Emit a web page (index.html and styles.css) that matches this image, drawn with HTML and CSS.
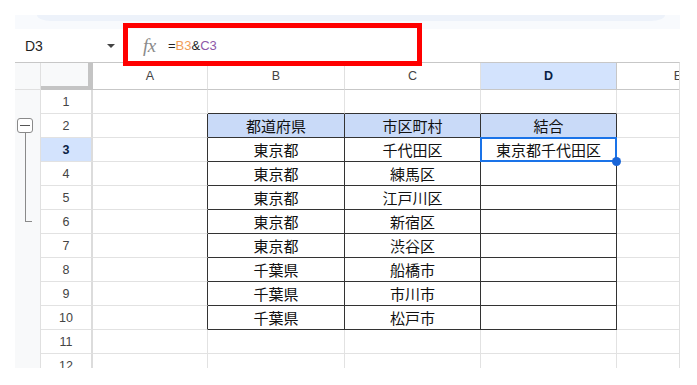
FILE: index.html
```html
<!DOCTYPE html>
<html lang="ja">
<head>
<meta charset="utf-8">
<link rel="stylesheet" href="styles.css">
</head>
<body>
<div class="app">
  <div class="top-band"><div class="pill"></div></div>
  <div class="fbar">
    <div class="namebox"><span class="name">D3</span><span class="caret"></span></div>
    <div class="formula"><span class="fx">fx</span><span class="ftext">=<span class="ref-b">B3</span>&amp;<span class="ref-c">C3</span></span></div>
    <div class="highlight"></div>
  </div>
  <div class="sheet">
    <div class="strip-head"></div>
    <div class="corner"></div>
    <div class="colh">A</div>
    <div class="colh">B</div>
    <div class="colh">C</div>
    <div class="colh active">D</div>
    <div class="colh clip"><span>E</span></div>

    <div class="strip">
      <div class="grp-box"><span class="minus"></span></div>
      <div class="grp-line"></div>
    </div>

    <div class="rowh">1</div>
    <div class="c"></div><div class="c tb-top"></div><div class="c tb-top"></div><div class="c tb-top"></div><div class="c"></div>

    <div class="rowh">2</div>
    <div class="c tb-left"></div><div class="c t hdr">都道府県</div><div class="c t hdr">市区町村</div><div class="c t hdr">結合</div><div class="c"></div>

    <div class="rowh active">3</div>
    <div class="c tb-left"></div><div class="c t">東京都</div><div class="c t">千代田区</div><div class="c t sel">東京都千代田区</div><div class="c"></div>

    <div class="rowh">4</div>
    <div class="c tb-left"></div><div class="c t">東京都</div><div class="c t">練馬区</div><div class="c t"></div><div class="c"></div>

    <div class="rowh">5</div>
    <div class="c tb-left"></div><div class="c t">東京都</div><div class="c t">江戸川区</div><div class="c t"></div><div class="c"></div>

    <div class="rowh">6</div>
    <div class="c tb-left"></div><div class="c t">東京都</div><div class="c t">新宿区</div><div class="c t"></div><div class="c"></div>

    <div class="rowh">7</div>
    <div class="c tb-left"></div><div class="c t">東京都</div><div class="c t">渋谷区</div><div class="c t"></div><div class="c"></div>

    <div class="rowh">8</div>
    <div class="c tb-left"></div><div class="c t">千葉県</div><div class="c t">船橋市</div><div class="c t"></div><div class="c"></div>

    <div class="rowh">9</div>
    <div class="c tb-left"></div><div class="c t">千葉県</div><div class="c t">市川市</div><div class="c t"></div><div class="c"></div>

    <div class="rowh">10</div>
    <div class="c tb-left"></div><div class="c t">千葉県</div><div class="c t">松戸市</div><div class="c t"></div><div class="c"></div>

    <div class="rowh">11</div>
    <div class="c"></div><div class="c"></div><div class="c"></div><div class="c"></div><div class="c"></div>

    <div class="rowh">12</div>
    <div class="c"></div><div class="c"></div><div class="c"></div><div class="c"></div><div class="c"></div>
  </div>
</div>
</body>
</html>
```
FILE: styles.css
```css
* { box-sizing: border-box; }
html, body { margin: 0; padding: 0; background: #fff; }
body { width: 697px; height: 385px; overflow: hidden; font-family: "Liberation Sans", Arial, sans-serif; }

.app { padding: 15px 0 0 15px; width: 697px; }

.top-band { width: 665px; height: 14px; background: #f8fafd; }
.pill { margin-left: 22px; width: 628px; height: 6px; background: #edf2fa; border-radius: 0 0 14px 14px / 0 0 6px 6px; }

.fbar { position: relative; height: 33px; display: flex; align-items: center; width: 665px; }
.namebox { width: 108px; display: flex; align-items: center; padding-left: 10px; }
.name { font-size: 14px; color: #1f1f1f; width: 82px; }
.caret { width: 0; height: 0; border-left: 4.5px solid transparent; border-right: 4.5px solid transparent; border-top: 4.5px solid #444; margin-top: 1px; }
.formula { display: flex; align-items: center; padding-left: 20px; }
.fx { font-family: "Liberation Serif", "DejaVu Serif", serif; font-style: italic; font-size: 19px; color: #8a8a8a; width: 25px; letter-spacing: -0.5px; }
.ftext { font-size: 13px; color: #1f1f1f; }
.ref-b { color: #f29d57; }
.ref-c { color: #8e58a8; }
.highlight { position: absolute; left: 108px; top: -6px; width: 299px; height: 43px; border: 5px solid #ff0000; z-index: 5; }

.sheet {
  display: grid;
  grid-template-columns: 26px 52px 115px 137px 136px 136px 63px;
  grid-template-rows: 27px repeat(12, 24px);
  height: 306px;
  width: 665px;
  overflow: hidden;
  border-top: 1px solid #c7c7c7;
  border-right: 1px solid #e0e0e0;
}
.strip-head { background: #f8f9fa; border-right: 1px solid #e0e0e0; border-bottom: 1px solid #e0e0e0; }
.corner { background: #f8f9fa; border-right: 5px solid #c4c4c4; border-bottom: 4px solid #c4c4c4; }
.colh {
  display: flex; align-items: center; justify-content: center;
  font-size: 12.5px; color: #444;
  border-right: 1px solid #e0e0e0; border-bottom: 1px solid #c7c7c7;
}
.colh.active { background: #d3e3fd; color: #0a1f44; font-weight: bold; border-right-color: #c7c7c7; }
.colh.clip { justify-content: flex-start; overflow: hidden; border-right: none; }
.colh.clip span { flex: none; width: 122px; text-align: center; }

.strip {
  grid-column: 1; grid-row: 2 / 14;
  background: #f8f9fa; border-right: 1px solid #e0e0e0;
  display: flex; flex-direction: column; padding-top: 28px;
}
.grp-box {
  margin-left: 2px; width: 16px; height: 15px;
  border: 1px solid #8a8a8a; border-radius: 3px; background: #fff;
  display: flex; align-items: center; justify-content: center;
}
.minus { width: 10px; height: 1.5px; background: #555; }
.grp-line { margin-left: 10px; width: 7px; height: 89px; border-left: 1.5px solid #8a8a8a; border-bottom: 1.5px solid #8a8a8a; }

.rowh {
  display: flex; align-items: center; justify-content: center;
  font-size: 12.5px; color: #444;
  border-right: 2px solid #dcdcdc; border-bottom: 1px solid #e2e2e2;
}
.rowh.active { background: #d3e3fd; color: #0a1f44; font-weight: bold; }

.c { border-right: 1px solid #e2e2e2; border-bottom: 1px solid #e2e2e2; }
.c.tb-top { border-bottom-color: #333; }
.c.tb-left { border-right-color: #333; }
.c.t {
  border-right-color: #333; border-bottom-color: #333;
  display: flex; align-items: center; justify-content: center;
  font-family: "Noto Sans CJK JP", "Noto Sans", sans-serif;
  font-size: 15px; color: #111; line-height: 1;
}
.c.hdr { background: #c9daf8; }
.c.sel { position: relative; }
.c.sel::before {
  content: ""; position: absolute; left: -1px; top: -1px; right: -1px; bottom: -1px;
  border: 2px solid #1a73e8;
}
.c.sel::after {
  content: ""; position: absolute; right: -5px; bottom: -5px; width: 9px; height: 9px;
  border-radius: 50%; background: #1a66d8; z-index: 2;
}
```
